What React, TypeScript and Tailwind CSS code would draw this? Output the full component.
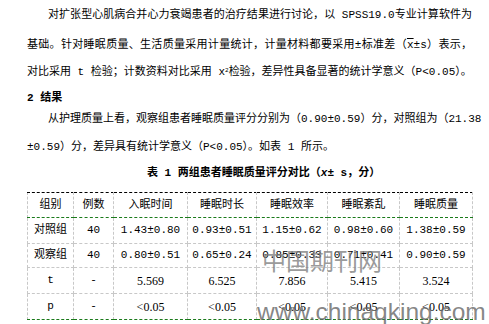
import React from "react";

const cjk = "font-['Liberation_Mono','Noto_Sans_CJK_SC',monospace]";
const times = "font-['Liberation_Serif',serif]";

type Row = { cells: string[]; num?: boolean };

const rows: Row[] = [
  { cells: ["对照组", "40", "1.43±0.80", "0.93±0.51", "1.15±0.62", "0.98±0.60", "1.38±0.59"] },
  { cells: ["观察组", "40", "0.80±0.51", "0.65±0.24", "0.85±0.33", "0.71±0.41", "0.90±0.59"] },
  { cells: ["t", "-", "5.569", "6.525", "7.856", "5.415", "3.524"], num: true },
  { cells: ["p", "-", "<0.05", "<0.05", "<0.05", "<0.05", "<0.05"], num: true },
];

const heads = ["组别", "例数", "入眠时间", "睡眠时长", "睡眠效率", "睡眠紊乱", "睡眠质量"];
const widths = [46, 40, 74, 69, 71, 72, 73];

export default function App() {
  return (
    <div className={`relative w-[489px] h-[324px] overflow-hidden bg-white text-black text-[11px] ${cjk}`}>
      <div className="pl-[27px] pr-[17px]">
        {/* 第一段 */}
        <div className="w-[445px] h-[30px] leading-[30px] pl-[21px] whitespace-nowrap [text-align-last:justify]">
          对扩张型心肌病合并心力衰竭患者的治疗结果进行讨论，以 SPSS19.0专业计算软件为
        </div>
        <div className="w-[445px] h-[30px] leading-[30px] whitespace-nowrap [text-align-last:justify]">
          基础。针对睡眠质量、生活质量采用计量统计，计量材料都要采用±标准差（
          <span className="overline">x</span>±s）表示，
        </div>
        <div className="h-[24px] leading-[24px] whitespace-nowrap">
          对比采用 t 检验；计数资料对比采用 x<sup className="text-[6px]">2</sup>检验，差异性具备显著的统计学意义（P&lt;0.05）。
        </div>

        {/* 结果 */}
        <div className="h-[28px] leading-[28px] font-bold">2 结果</div>
        <div className="w-[445px] h-[14px] leading-[14px] pl-[21px] whitespace-nowrap [text-align-last:justify]">
          从护理质量上看，观察组患者睡眠质量评分分别为（0.90±0.59）分，对照组为（21.38
        </div>
        <div className="h-[42px] leading-[42px] whitespace-nowrap">
          ±0.59）分，差异具有统计学意义（P&lt;0.05）。如表 1 所示。
        </div>

        <div className="h-[10px] leading-[10px] pl-[120px] font-bold whitespace-nowrap">
          表 1 两组患者睡眠质量评分对比（<span className="italic">x</span>± s，分）
        </div>

        {/* 表格 */}
        <table className="mt-[14px] table-fixed border-collapse w-[445px]">
          <colgroup>
            {widths.map((w, i) => (
              <col key={i} style={{ width: w }} />
            ))}
          </colgroup>
          <thead>
            <tr className="h-[25px]">
              {heads.map((h) => (
                <th
                  key={h}
                  className="font-normal text-center border border-dashed border-[#c8c8c8] border-t-[1.5px] border-t-solid border-t-black border-b border-b-solid border-b-[#1a7a1a] p-0"
                >
                  {h}
                </th>
              ))}
            </tr>
          </thead>
          <tbody>
            {rows.map((r, ri) => (
              <tr key={ri} className={ri === 1 ? "h-[24px]" : "h-[26px]"}>
                {r.cells.map((c, ci) => (
                  <td
                    key={ci}
                    className={`text-center p-0 whitespace-nowrap border border-dashed border-[#c8c8c8] ${
                      ri === 3 ? "border-b-solid border-b-[#1a7a1a]" : ""
                    } ${r.num && ci > 1 ? `${times} text-[12px]` : ""}`}
                  >
                    {c}
                  </td>
                ))}
              </tr>
            ))}
          </tbody>
        </table>
      </div>

      {/* 水印 */}
      <div className="absolute left-[262px] top-[245px] text-[24px] leading-[30px] text-[#808080]/80 font-['Noto_Sans_CJK_SC',sans-serif]">
        中国期刊网
      </div>
      <div className="absolute left-[257px] top-[297px] text-[24.5px] leading-[30px] text-[#666666]/80 font-['Liberation_Sans',sans-serif] whitespace-nowrap">
        www.chinaqking.com
      </div>
    </div>
  );
}
